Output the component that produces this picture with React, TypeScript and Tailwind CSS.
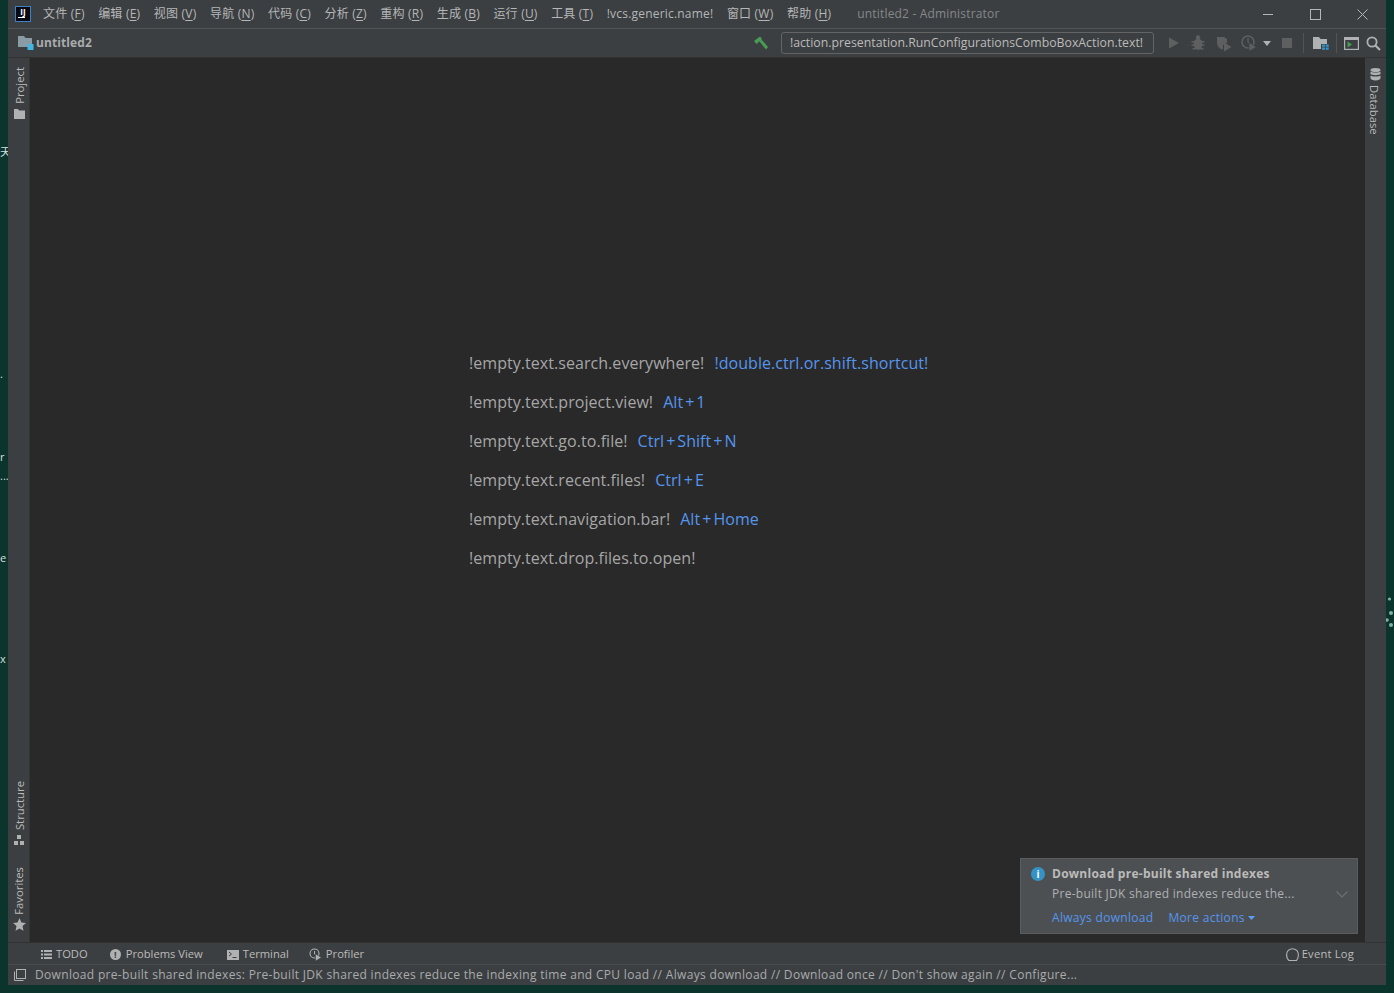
import React from "react";

const sans = "font-['Open_Sans','Noto_Sans_CJK_SC',sans-serif]";

const menus = [
  ["文件", "F"],
  ["编辑", "E"],
  ["视图", "V"],
  ["导航", "N"],
  ["代码", "C"],
  ["分析", "Z"],
  ["重构", "R"],
  ["生成", "B"],
  ["运行", "U"],
  ["工具", "T"],
];

const hints = [
  ["!empty.text.search.everywhere!", "!double.ctrl.or.shift.shortcut!"],
  ["!empty.text.project.view!", "Alt+1"],
  ["!empty.text.go.to.file!", "Ctrl+Shift+N"],
  ["!empty.text.recent.files!", "Ctrl+E"],
  ["!empty.text.navigation.bar!", "Alt+Home"],
  ["!empty.text.drop.files.to.open!", ""],
];

function Menu({ label, k }: { label: string; k: string }) {
  return (
    <span className="whitespace-nowrap">
      {label} (<span className="underline underline-offset-2">{k}</span>)
    </span>
  );
}

function Shortcut({ text }: { text: string }) {
  // the + sign sits wider in the original font
  const parts = text.split("+");
  return (
    <span className="ml-[10px] text-[#5595ee]">
      {parts.map((p, i) => (
        <React.Fragment key={p}>
          {i > 0 && <span className="mx-[2px]">+</span>}
          {p}
        </React.Fragment>
      ))}
    </span>
  );
}

function Scraps() {
  // bits of desktop icons' captions poking out from behind the window
  const bits = [
    ["top-[145px]", "天"],
    ["top-[367px]", "."],
    ["top-[450px]", "r"],
    ["top-[469px]", "..."],
    ["top-[551px]", "e"],
    ["top-[652px]", "x"],
  ];
  return (
    <>
      {bits.map(([top, t]) => (
        <span key={top} className={`absolute left-0 w-2 overflow-hidden text-[11px] leading-[14px] text-[#d8dedb] ${top}`}>
          {t}
        </span>
      ))}
    </>
  );
}

function VerticalLabel({ text }: { text: string }) {
  return (
    <span className="[writing-mode:vertical-rl] rotate-180 text-[11.3px] leading-none text-[#bbbbbb]">{text}</span>
  );
}

function RunIcons() {
  return (
    <div className="flex items-center h-full">
      <svg width="18" height="18" viewBox="0 0 18 18" className="ml-[11px]">
        <path d="M4 3.5 14 9 4 14.5z" fill="#5d5f60" />
      </svg>
      <svg width="18" height="18" viewBox="0 0 18 18" className="ml-[6px]">
        <g fill="#5d5f60">
          <ellipse cx="9" cy="10" rx="4.5" ry="5.5" />
          <rect x="2.5" y="7" width="13" height="1.4" />
          <rect x="2.5" y="10.5" width="13" height="1.4" />
          <rect x="3.5" y="14" width="11" height="1.4" />
          <circle cx="9" cy="3.5" r="2.2" />
        </g>
      </svg>
      <svg width="18" height="18" viewBox="0 0 18 18" className="ml-[8px]">
        <path d="M2 3h7l3 2v4l-4 2v4.5C4 15 2 12 2 8z" fill="#5d5f60" />
        <path d="M9 8.5 16.5 13 9 17.5z" fill="#5d5f60" />
      </svg>
      <svg width="18" height="18" viewBox="0 0 18 18" className="ml-[7px]">
        <circle cx="8" cy="8" r="6" fill="none" stroke="#5d5f60" strokeWidth="1.6" />
        <path d="M8 4v4l2 2" fill="none" stroke="#5d5f60" strokeWidth="1.3" />
        <path d="M9 8.5 16.5 13 9 17.5z" fill="#5d5f60" stroke="#3c3f41" strokeWidth="0.8" />
      </svg>
      <svg width="8" height="5" viewBox="0 0 8 5" className="ml-[5px]">
        <path d="M0 0h8L4 5z" fill="#afb1b3" />
      </svg>
      <span className="ml-[11px] w-[10px] h-[10px] bg-[#5d5f60]" />
      <span className="ml-[11px] w-px h-5 bg-[#515355]" />
      <svg width="16" height="14" viewBox="0 0 16 14" className="ml-[9px]">
        <path d="M0 1h6l1.5 2H14v5H8v5H0z" fill="#afb1b3" />
        <rect x="9" y="8.5" width="3" height="2.3" fill="#3592c4" />
        <rect x="12.7" y="8.5" width="3" height="2.3" fill="#3592c4" />
        <rect x="9" y="11.5" width="3" height="2.3" fill="#3592c4" />
        <rect x="12.7" y="11.5" width="3" height="2.3" fill="#3592c4" />
      </svg>
      <span className="ml-[7px] w-px h-5 bg-[#515355]" />
      <svg width="15" height="13" viewBox="0 0 15 13" className="ml-[7px]">
        <rect x="0.6" y="0.6" width="13.8" height="11.8" fill="none" stroke="#afb1b3" strokeWidth="1.2" />
        <rect x="1" y="1" width="13" height="2" fill="#afb1b3" />
        <path d="M3.5 4.5 8 7.5l-4.5 3z" fill="#499c54" />
      </svg>
      <svg width="15" height="15" viewBox="0 0 15 15" className="ml-[7px]">
        <circle cx="6" cy="6" r="4.6" fill="none" stroke="#afb1b3" strokeWidth="1.8" />
        <path d="M9.5 9.5 14 14" stroke="#afb1b3" strokeWidth="2.2" />
      </svg>
    </div>
  );
}

export default function App() {
  return (
    <div className={`relative w-[1394px] h-[993px] overflow-hidden bg-[#0b352c] ${sans}`}>
      <Scraps />
      <svg width="8" height="40" viewBox="0 0 8 40" className="absolute left-[1386px] top-[595px]">
        <g fill="#7fb3a4">
          <circle cx="3.5" cy="4" r="1.6" />
          <circle cx="5" cy="18" r="2" />
          <circle cx="1" cy="25" r="1.8" />
          <circle cx="5" cy="30" r="2" />
        </g>
      </svg>

      <div className="ml-2 w-[1378px] h-[985px] flex flex-col bg-[#3c3f41]">
        {/* title + menu */}
        <div className="h-[29px] shrink-0 flex items-center border-b border-[#515355] text-[12px] tracking-[0.2px] text-[#b4b6b8]">
          <div className="ml-[7px] w-4 h-4 bg-[#0a0a14] border border-[#3f7fc4] flex flex-col items-center shrink-0">
            <span className="text-[8px] leading-[9px] font-bold text-white">IJ</span>
            <span className="w-[7px] h-px mt-px bg-white self-start ml-[2px]" />
          </div>
          <div className="ml-[12px] flex gap-[13.55px]">
            {menus.map(([l, k]) => (
              <Menu key={k} label={l} k={k} />
            ))}
            <span>!vcs.generic.name!</span>
            <Menu label="窗口" k="W" />
            <Menu label="帮助" k="H" />
          </div>
          <span className="ml-[26px] text-[#85888a] whitespace-nowrap tracking-[0.18px]">untitled2 - Administrator</span>
          <div className="ml-auto flex items-center h-full">
            <span className="w-[10px] h-px bg-[#b4b6b8]" />
            <span className="ml-[37px] w-[11px] h-[11px] border border-[#b4b6b8]" />
            <svg width="11" height="11" viewBox="0 0 11 11" className="ml-[36px] mr-[18px]">
              <path d="M0.5 0.5 10.5 10.5M10.5 0.5 0.5 10.5" stroke="#b4b6b8" strokeWidth="1" />
            </svg>
          </div>
        </div>

        {/* navigation toolbar */}
        <div className="h-[29px] shrink-0 flex items-center border-b border-[#323232] text-[12px] text-[#bbbbbb]">
          <svg width="16" height="15" viewBox="0 0 16 15" className="ml-[10px]">
            <path d="M0 0h6l1.5 2H14v9H0z" fill="#8a9ba6" />
            <rect x="9.5" y="8" width="6" height="6" fill="#40b6e0" />
          </svg>
          <span className="ml-[2px] font-bold text-[#a9abad] tracking-[0.1px]">untitled2</span>
          <svg width="16" height="15" viewBox="0 0 16 15" className="ml-[661px]">
            <path d="M1 5 7 0.5 9 3 3.5 8zM6.5 5.5 8.5 3.5 15 11l-2 2.5z" fill="#499c54" />
          </svg>
          <div className="ml-[12px] w-[373px] h-[22px] shrink-0 flex items-center justify-center pt-px pr-[2px] rounded-[3px] border border-[#646464] text-[12.3px] text-[#bbbbbb] whitespace-nowrap overflow-hidden">
            !action.presentation.RunConfigurationsComboBoxAction.text!
          </div>
          <RunIcons />
        </div>

        <div className="flex-1 min-h-0 flex">
          {/* left tool stripe */}
          <div className="w-[22px] shrink-0 flex flex-col items-center pl-[2px] border-r border-[#333537]">
            <div className="flex flex-col items-center pt-[9px] gap-[5px]">
              <VerticalLabel text="Project" />
              <svg width="11" height="10" viewBox="0 0 11 10">
                <path d="M0 0h4l1 1.5h6V10H0z" fill="#afb1b3" />
              </svg>
            </div>
            <div className="mt-auto flex flex-col items-center gap-[5px] mb-[97px]">
              <VerticalLabel text="Structure" />
              <svg width="10" height="10" viewBox="0 0 10 10" fill="#afb1b3">
                <rect x="3" y="0" width="4" height="4" />
                <rect x="0" y="6" width="4" height="4" />
                <rect x="6" y="6" width="4" height="4" />
              </svg>
            </div>
            <div className="absolute left-[8px] w-[22px] top-[867px] flex flex-col items-center gap-[3px]">
              <VerticalLabel text="Favorites" />
              <svg width="13" height="13" viewBox="0 0 13 13">
                <path d="M6.5 0 8.4 4.4 13 4.9 9.5 8l1 4.8-4-2.4-4 2.4 1-4.8L0 4.9l4.6-.5z" fill="#afb1b3" />
              </svg>
            </div>
          </div>

          {/* empty editor */}
          <div className="relative flex-1 bg-[#292929]">
            <div className="pt-[294px] pl-[439px] flex flex-col gap-[16px] text-[16px] leading-[23px] tracking-[0.05px]">
              {hints.map(([a, b]) => (
                <div key={a} className="whitespace-nowrap text-[#a6a6a6]">
                  {a}
                  {b && <Shortcut text={b} />}
                </div>
              ))}
            </div>

            {/* balloon */}
            <div className="absolute right-[7px] bottom-[8px] w-[338px] h-[76px] bg-[#4d5052] border border-[#5a5d5f] pl-[10px] pr-[8px] pt-[5px] text-[12px] leading-[20px]">
              <div className="flex items-center gap-[7px]">
                <span className="w-[14px] h-[14px] rounded-full bg-[#3592c4] flex items-center justify-center text-[10px] font-bold text-white">i</span>
                <span className="font-bold text-[#bbbbbb] tracking-[0.26px]">Download pre-built shared indexes</span>
              </div>
              <div className="flex items-center pl-[21px] text-[#aeb0b2] tracking-[0.27px]">
                <span>Pre-built JDK shared indexes reduce the...</span>
                <svg width="12" height="7" viewBox="0 0 12 7" className="ml-auto mr-[1px]">
                  <path d="M0.5 0.5 6 6l5.5-5.5" fill="none" stroke="#6e7072" strokeWidth="1.2" />
                </svg>
              </div>
              <div className="flex items-center pl-[21px] mt-[4px] text-[#5595ee] tracking-[0.3px]">
                <span>Always download</span>
                <span className="ml-[15px]">More actions</span>
                <svg width="7" height="4" viewBox="0 0 7 4" className="ml-[3px]">
                  <path d="M0 0h7L3.5 4z" fill="#589df6" />
                </svg>
              </div>
            </div>
          </div>

          {/* right tool stripe */}
          <div className="w-[21px] shrink-0 flex flex-col items-center pt-[10px] gap-[4px]">
            <svg width="11" height="13" viewBox="0 0 11 13" fill="#afb1b3">
              <ellipse cx="5.5" cy="2" rx="5" ry="2" />
              <path d="M0.5 3.5c1 1.3 9 1.3 10 0V6c-1 1.5-9 1.5-10 0zM0.5 7.5c1 1.3 9 1.3 10 0V10c0 1.5-2 2.5-5 2.5s-5-1-5-2.5z" />
            </svg>
            <span className="[writing-mode:vertical-rl] mr-[2px] text-[11.3px] leading-none text-[#bbbbbb]">Database</span>
          </div>
        </div>

        {/* tool windows bar */}
        <div className="h-[22px] shrink-0 flex items-center pt-[2px] border-t border-[#323232] text-[11.2px] text-[#bbbbbb]">
          <svg width="11" height="9" viewBox="0 0 11 9" fill="#afb1b3" className="ml-[33px]">
            <rect x="0" y="0" width="2" height="2" />
            <rect x="3" y="0" width="8" height="2" />
            <rect x="0" y="3.5" width="2" height="2" />
            <rect x="3" y="3.5" width="8" height="2" />
            <rect x="0" y="7" width="2" height="2" />
            <rect x="3" y="7" width="8" height="2" />
          </svg>
          <span className="ml-[4px]">TODO</span>
          <span className="ml-[22px] w-[11px] h-[11px] rounded-full bg-[#afb1b3] flex items-center justify-center text-[9px] font-bold text-[#3c3f41] leading-none">!</span>
          <span className="ml-[5px]">Problems View</span>
          <svg width="12" height="10" viewBox="0 0 12 10" className="ml-[24px]">
            <rect width="12" height="10" fill="#afb1b3" />
            <path d="M2 2l2.5 2L2 6" fill="none" stroke="#3c3f41" strokeWidth="1" />
            <rect x="5.5" y="7" width="4" height="1" fill="#3c3f41" />
          </svg>
          <span className="ml-[4px]">Terminal</span>
          <svg width="13" height="13" viewBox="0 0 13 13" className="ml-[20px]">
            <circle cx="5.5" cy="5.5" r="4.5" fill="none" stroke="#afb1b3" strokeWidth="1.1" />
            <path d="M5.5 3v3l1.5 1" fill="none" stroke="#afb1b3" strokeWidth="1" />
            <path d="M6.5 6 12.5 9.5 6.5 13z" fill="#afb1b3" stroke="#3c3f41" strokeWidth="0.6" />
          </svg>
          <span className="ml-[4px]">Profiler</span>
          <div className="ml-auto mr-[32px] flex items-center">
            <svg width="13" height="13" viewBox="0 0 13 13">
              <path d="M3 12.5C1.5 11.5.6 9 .6 6.8.6 3.4 3.2.7 6.5.7s5.9 2.7 5.9 6.1c0 2.2-.9 4.7-1.9 5.7z" fill="none" stroke="#afb1b3" strokeWidth="1.1" />
            </svg>
            <span className="ml-[3px] tracking-[0.2px]">Event Log</span>
          </div>
        </div>

        {/* status bar */}
        <div className="h-[21px] shrink-0 flex items-center border-t border-[#4a4d4f] text-[12px] text-[#a9abad] tracking-[0.325px]">
          <svg width="12" height="12" viewBox="0 0 12 12" className="ml-[6px]">
            <rect x="2.5" y="0.5" width="9" height="9" fill="none" stroke="#afb1b3" />
            <path d="M0.5 2.5v9h9" fill="none" stroke="#afb1b3" />
          </svg>
          <span className="ml-[9px] whitespace-nowrap">
            Download pre-built shared indexes: Pre-built JDK shared indexes reduce the indexing time and CPU load // Always download // Download once // Don't show again // Configure...
          </span>
        </div>
      </div>
    </div>
  );
}
